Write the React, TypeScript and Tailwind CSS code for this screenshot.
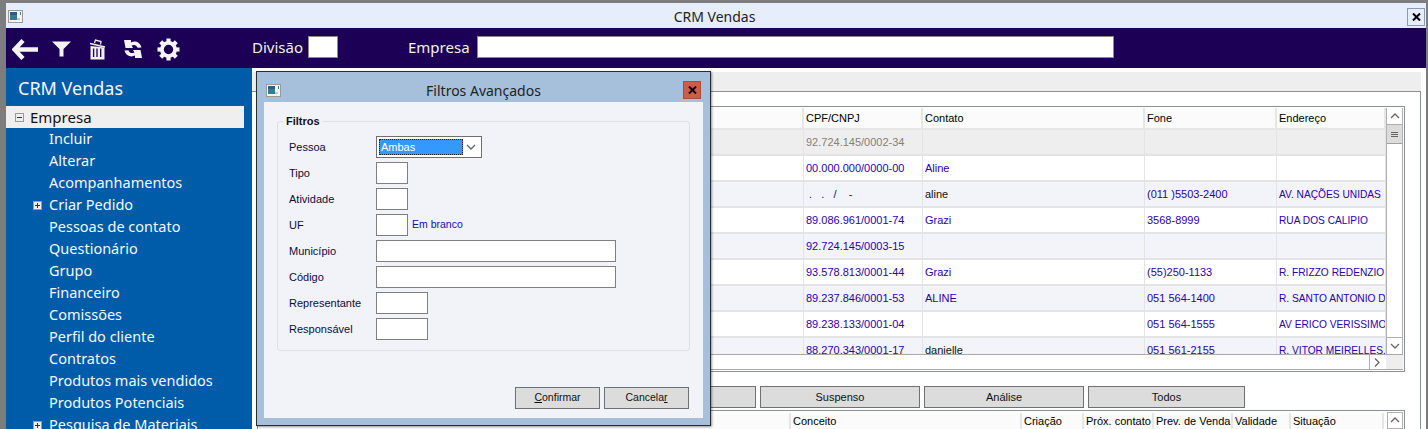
import React from "react";

const ui = { fontFamily: '"Noto Sans", sans-serif' };
const side = { fontFamily: '"Noto Sans", sans-serif' };
const small = { fontFamily: '"Liberation Sans", sans-serif' };

function WinIcon() {
  return (
    <svg width="15" height="13" viewBox="0 0 15 13" className="shrink-0">
      <rect x="0.5" y="0.5" width="14" height="12" fill="#f4f4f4" stroke="#9a9a9a" />
      <rect x="2" y="2" width="7" height="8" fill="#2f7f8f" />
      <rect x="2" y="2" width="7" height="3" fill="#2a5f86" />
      <rect x="9" y="8" width="3" height="2" fill="#c5c5c5" />
      <rect x="12" y="2" width="1" height="3" fill="#3a7a8a" />
    </svg>
  );
}

function CloseX() {
  return (
    <svg width="9" height="8" viewBox="0 0 9 8">
      <path d="M1 0.5 L8 7.5 M8 0.5 L1 7.5" stroke="#000" strokeWidth="2" fill="none" />
    </svg>
  );
}

const menu = [
  ["Incluir", false],
  ["Alterar", false],
  ["Acompanhamentos", false],
  ["Criar Pedido", true],
  ["Pessoas de contato", false],
  ["Questionário", false],
  ["Grupo", false],
  ["Financeiro", false],
  ["Comissões", false],
  ["Perfil do cliente", false],
  ["Contratos", false],
  ["Produtos mais vendidos", false],
  ["Produtos Potenciais", false],
  ["Pesquisa de Materiais", true],
] as const;

const rows = [
  { c: "92.724.145/0002-34", n: "", f: "", e: "", bg: "bg-[#eeeeee]", t: "text-[#857f78]" },
  { c: "00.000.000/0000-00", n: "Aline", f: "", e: "", bg: "bg-white", t: "text-[#2a00b0]" },
  { c: " .   .   /    -", n: "aline", f: "(011 )5503-2400", e: "AV. NAÇÕES UNIDAS", bg: "bg-[#f2f4fa]", t: "text-[#2a00b0]" },
  { c: "89.086.961/0001-74", n: "Grazi", f: "3568-8999", e: "RUA DOS CALIPIO", bg: "bg-white", t: "text-[#2a00b0]" },
  { c: "92.724.145/0003-15", n: "", f: "", e: "", bg: "bg-[#f2f4fa]", t: "text-[#2a00b0]" },
  { c: "93.578.813/0001-44", n: "Grazi", f: "(55)250-1133", e: "R. FRIZZO REDENZIO", bg: "bg-white", t: "text-[#2a00b0]" },
  { c: "89.237.846/0001-53", n: "ALINE", f: "051 564-1400", e: "R. SANTO ANTONIO D", bg: "bg-[#f2f4fa]", t: "text-[#2a00b0]" },
  { c: "89.238.133/0001-04", n: "", f: "051 564-1555", e: "AV ERICO VERISSIMO", bg: "bg-white", t: "text-[#2a00b0]" },
  { c: "88.270.343/0001-17", n: "danielle", f: "051 561-2155", e: "R. VITOR MEIRELLES.", bg: "bg-[#f2f4fa]", t: "text-[#2a00b0]" },
];

const cols = ["w-[545px]", "w-[119px]", "w-[222px]", "w-[132px]", "w-[109px]"];

function HeadCell({ w, children }: { w: string; children?: React.ReactNode }) {
  return (
    <div className={`${w} shrink-0 h-full bg-[#fbfbfb] border-r-2 border-b-2 border-[#e6e6e6] pl-[2px] flex items-center text-[11px] text-black whitespace-nowrap overflow-hidden`}>
      {children}
    </div>
  );
}

function Cell({ w, className, children }: { w: string; className?: string; children?: React.ReactNode }) {
  return (
    <div className={`${w} shrink-0 h-full border-r border-b-2 border-[#e4e4e4] pl-[2px] pt-[1px] flex items-center whitespace-pre overflow-hidden ${className ?? "text-[11px]"}`}>
      {children}
    </div>
  );
}

function Chevron({ d }: { d: "up" | "down" | "right" }) {
  const p = d === "up" ? "M1 6 L5 2 L9 6" : d === "down" ? "M1 2 L5 6 L9 2" : "M2 0.5 L6 4.5 L2 8.5";
  return (
    <svg width="10" height="9" viewBox="0 0 10 9">
      <path d={p} stroke="#666" strokeWidth="1.3" fill="none" />
    </svg>
  );
}

function Field({ label, w, children }: { label: string; w: string; children?: React.ReactNode }) {
  return (
    <div className="flex items-center h-[22px]">
      <span className="w-[87px] shrink-0 text-[11px] text-[#0c0c3c]">{label}</span>
      <div className={`${w} h-[22px] bg-white border border-[#7f7f7f]`} />
      {children}
    </div>
  );
}

function TabButton({ w, children }: { w: string; children?: React.ReactNode }) {
  return (
    <div className={`${w} h-[22px] shrink-0 bg-[#dcdcdc] border border-[#707070] flex items-center justify-center text-[11px] text-[#111]`}>
      {children}
    </div>
  );
}

function DialogButton({ u, rest, before }: { u: string; rest: string; before?: string }) {
  return (
    <div className="w-[85px] h-[22px] bg-[#dcdcdc] border border-[#707070] flex items-center justify-center text-[10.5px] text-[#111]">
      {before}
      <span className="underline">{u}</span>
      {rest}
    </div>
  );
}

export default function App() {
  return (
    <div className="relative w-[1428px] h-[429px] overflow-hidden bg-[#e6eefc] border-t-[3px] border-l-[6px] border-r-[2px] border-[#7d7d7d] flex flex-col" style={ui}>
      {/* Title bar */}
      <div className="h-[25px] shrink-0 flex items-center justify-between pl-[2px] pr-[1px] pt-[2px] relative">
        <WinIcon />
        <span className="absolute left-0 right-0 text-center text-[14px] text-[#222] pr-[3px]">CRM Vendas</span>
        <div className="w-[18px] h-[18px] border border-[#8a9ab8] flex items-center justify-center">
          <CloseX />
        </div>
      </div>

      {/* Toolbar */}
      <div className="h-[40px] shrink-0 bg-[#1b0055] flex items-center pb-[2px] text-[#f2f2f2]">
        <div className="flex items-center ml-[6px] w-[240px] mt-[4px]">
          <svg width="27" height="21" viewBox="0 0 27 21">
            <path d="M11 1.5 L2.5 10.5 L11 19.5 M3.5 10.5 H26" stroke="#f4f4f4" strokeWidth="4.4" fill="none" />
          </svg>
          <svg width="19" height="16" viewBox="0 0 19 16" className="ml-[13px]">
            <path d="M0 0.5 H19 L11.5 8 V15.5 H7.5 V8 Z" fill="#f4f4f4" />
          </svg>
          <svg width="17" height="21" viewBox="0 0 17 21" className="ml-[18px]">
            <path d="M1 4.5 L16 8 M5.5 4 L6.5 1 L12 2.5 L11.5 5.5" stroke="#f0f0f0" strokeWidth="1.3" fill="none" />
            <path d="M1.5 7 L1.5 20.5 H15.5 V8.5 Z" fill="#f0f0f0" />
            <path d="M4.6 9.5 V18 M8 9.5 V18 M11.7 9.5 V18" stroke="#1b0055" strokeWidth="1.3" />
          </svg>
          <svg width="20" height="20" viewBox="0 0 20 20" className="ml-[17px]">
            <path d="M1 1 H8 V3.4 C12 1.4 17 3 18.5 8.5 L14.6 8.8 C13.6 6 11 5.2 8.6 6.6 L10 9 L2.5 9 Z" fill="#f4f4f4" />
            <path d="M19 19 H12 V16.6 C8 18.6 3 17 1.5 11.5 L5.4 11.2 C6.4 14 9 14.8 11.4 13.4 L10 11 L17.5 11 Z" fill="#f4f4f4" />
          </svg>
          <svg width="23" height="23" viewBox="0 0 23 23" className="ml-[14px]">
            <circle cx="11.5" cy="11.5" r="6.6" fill="none" stroke="#f4f4f4" strokeWidth="3.8" />
            <g stroke="#f4f4f4" strokeWidth="4.2">
              <path d="M11.5 0.5 V4" />
              <path d="M11.5 19 V22.5" />
              <path d="M0.5 11.5 H4" />
              <path d="M19 11.5 H22.5" />
              <path d="M3.7 3.7 L6.2 6.2" />
              <path d="M16.8 16.8 L19.3 19.3" />
              <path d="M3.7 19.3 L6.2 16.8" />
              <path d="M16.8 6.2 L19.3 3.7" />
            </g>
          </svg>
        </div>
        <span className="w-[56px] shrink-0 text-[15px] leading-none">Divisão</span>
        <div className="w-[30px] h-[22px] bg-white border border-[#8a8a8a]" />
        <span className="text-[15px] leading-none ml-[70px]">Empresa</span>
        <div className="w-[637px] h-[22px] bg-white ml-[7px] border border-[#8a8a8a]" />
      </div>

      <div className="flex-1 flex min-h-0">
        {/* Sidebar */}
        <div className="w-[246px] shrink-0 bg-[#005ca8] text-[#f4f7fb]" style={side}>
          <div className="h-[38px] pl-[12px] pr-[8px] pt-[2px] flex items-center text-[18px]">CRM Vendas</div>
          <div className="h-[22px] mr-[8px] bg-[#efefef] flex items-center text-[#111] text-[15px] pt-[1px]">
            <div className="w-[9px] h-[9px] ml-[9px] mr-[6px] border border-[#999] bg-[#eee] flex items-center justify-center">
              <div className="w-[5px] h-px bg-[#333]" />
            </div>
            Empresa
          </div>
          {menu.map(([m, plus]) => (
            <div key={m} className="h-[22px] flex items-center text-[14.5px] whitespace-nowrap">
              <div className="w-[43px] shrink-0 flex justify-end pr-[7px]">
                {plus && (
                  <div className="w-[9px] h-[9px] border border-[#999] bg-[#eee] relative flex items-center justify-center">
                    <div className="w-[5px] h-px bg-[#333]" />
                    <div className="absolute w-px h-[5px] bg-[#333]" />
                  </div>
                )}
              </div>
              {m}
            </div>
          ))}
        </div>

        {/* Main */}
        <div className="flex-1 min-w-0 bg-white flex flex-col" style={small}>
          <div className="h-[4px] shrink-0 bg-white" />
          <div className="mr-[5px] h-[20px] shrink-0 bg-[#eeeeee] border-b border-[#8a8f9c]" />
          <div className="mr-[5px] flex-1 border-r border-[#8a8f9c] pl-[5px] pt-[14px] bg-white min-h-0 overflow-hidden">
            {/* Top grid */}
            <div className="w-[1148px] h-[266px] border border-[#8a8f9c] p-[1px] flex flex-col bg-white">
              <div className="flex flex-1 min-h-0">
                <div className="w-[1127px] shrink-0 flex flex-col overflow-hidden">
                  <div className="h-[22px] shrink-0 flex">
                    <HeadCell w={cols[0]} />
                    <HeadCell w={cols[1]}>CPF/CNPJ</HeadCell>
                    <HeadCell w={cols[2]}>Contato</HeadCell>
                    <HeadCell w={cols[3]}>Fone</HeadCell>
                    <HeadCell w={cols[4]}>Endereço</HeadCell>
                  </div>
                  {rows.map((r) => (
                    <div key={r.c} className={`h-[26px] shrink-0 flex ${r.bg} ${r.t}`}>
                      <Cell w={cols[0]} />
                      <Cell w={cols[1]}>{r.c}</Cell>
                      <Cell w={cols[2]} className={r.n === "aline" || r.n === "danielle" ? "text-[#111] text-[11px]" : "text-[11px]"}>{r.n}</Cell>
                      <Cell w={cols[3]}>{r.f}</Cell>
                      <Cell w={cols[4]} className="text-[10.2px]">{r.e}</Cell>
                    </div>
                  ))}
                </div>
                <div className="w-[17px] shrink-0 border-x border-[#b0b0b0] flex flex-col bg-white">
                  <div className="h-[17px] flex items-center justify-center border-b border-[#b0b0b0]"><Chevron d="up" /></div>
                  <div className="h-[19px] bg-[#dcdcdc] border-b border-[#a0a0a0] flex flex-col items-center justify-center gap-[1px]">
                    <div className="w-[7px] h-px bg-[#666]" />
                    <div className="w-[7px] h-px bg-[#666]" />
                    <div className="w-[7px] h-px bg-[#666]" />
                  </div>
                  <div className="flex-1" />
                  <div className="h-[17px] flex items-center justify-center border-t border-[#b0b0b0]"><Chevron d="down" /></div>
                </div>
              </div>
              <div className="h-[16px] shrink-0 flex border-t border-[#a8a8a8] border-b">
                <div className="w-[1110px] shrink-0" />
                <div className="w-[17px] flex items-center justify-center border-l border-[#b0b0b0]"><Chevron d="right" /></div>
                <div className="flex-1 bg-[#eeeeee]" />
              </div>
            </div>

            {/* Tabs */}
            <div className="mt-[14px] flex justify-end gap-[4px] w-[988px]">
              <TabButton w="w-[160px]" />
              <TabButton w="w-[160px]">Suspenso</TabButton>
              <TabButton w="w-[160px]">Análise</TabButton>
              <TabButton w="w-[157px]">Todos</TabButton>
            </div>

            {/* Bottom grid */}
            <div className="mt-[2px] w-[1148px] h-[30px] border border-[#8a8f9c] p-[1px] flex">
              <div className="h-[20px] flex pt-[1px]">
                <HeadCell w="w-[532px]" />
                <HeadCell w="w-[231px]">Conceito</HeadCell>
                <HeadCell w="w-[62px]">Criação</HeadCell>
                <HeadCell w="w-[70px]">Próx. contato</HeadCell>
                <HeadCell w="w-[79px]">Prev. de Venda</HeadCell>
                <HeadCell w="w-[58px]">Validade</HeadCell>
                <HeadCell w="w-[93px]">Situação</HeadCell>
              </div>
              <div className="ml-[3px] w-[17px] h-[17px] border border-[#b0b0b0] flex items-center justify-center"><Chevron d="up" /></div>
            </div>
          </div>
        </div>
      </div>

      {/* Dialog */}
      <div className="absolute left-[250px] top-[68px] w-[455px] h-[355px] bg-[#a6c0dc] border border-[#2b2b2b] px-[7px] pb-[7px] flex flex-col shadow-[1px_1px_2px_rgba(0,0,0,0.4)]" style={small}>
        <div className="h-[30px] shrink-0 flex items-center justify-between relative pt-[6px] pl-[2px] pr-[2px]">
          <WinIcon />
          <span className="absolute left-0 right-0 text-center text-[14px] text-[#222]" style={ui}>Filtros Avançados</span>
          <div className="w-[18px] h-[18px] bg-[#cf5c48] border border-[#a8503f] flex items-center justify-center relative">
            <CloseX />
          </div>
        </div>
        <div className="flex-1 bg-[#f1f3f9] px-[13px] pt-[19px] flex flex-col">
          <div className="relative h-[230px] border border-[#dde1e6] rounded-[3px] pl-[11px] pt-[14px] flex flex-col gap-[4px]">
            <span className="absolute -top-[8px] left-[6px] px-[2px] bg-[#f1f3f9] text-[11px] font-bold text-[#111] leading-[14px]">Filtros</span>
            <div className="flex items-center h-[22px]">
              <span className="w-[87px] shrink-0 text-[11px] text-[#0c0c3c]">Pessoa</span>
              <div className="w-[106px] h-[22px] bg-white border border-[#6f6f6f] p-[2px] flex items-center">
                <div className="w-[84px] h-full bg-[#3399ff] border border-dotted border-[#222] text-white text-[11px] flex items-center pl-[1px]">Ambas</div>
                <div className="flex-1 flex justify-center"><Chevron d="down" /></div>
              </div>
            </div>
            <Field label="Tipo" w="w-[32px]" />
            <Field label="Atividade" w="w-[32px]" />
            <Field label="UF" w="w-[32px]">
              <span className="ml-[4px] text-[10.5px] text-[#1010b0]">Em branco</span>
            </Field>
            <Field label="Município" w="w-[240px]" />
            <Field label="Código" w="w-[240px]" />
            <Field label="Representante" w="w-[52px]" />
            <Field label="Responsável" w="w-[52px]" />
          </div>
          <div className="mt-[36px] flex justify-end gap-[4px] pr-[1px]">
            <DialogButton u="C" rest="onfirmar" />
            <DialogButton before="Cancela" u="r" rest="" />
          </div>
        </div>
      </div>
    </div>
  );
}
